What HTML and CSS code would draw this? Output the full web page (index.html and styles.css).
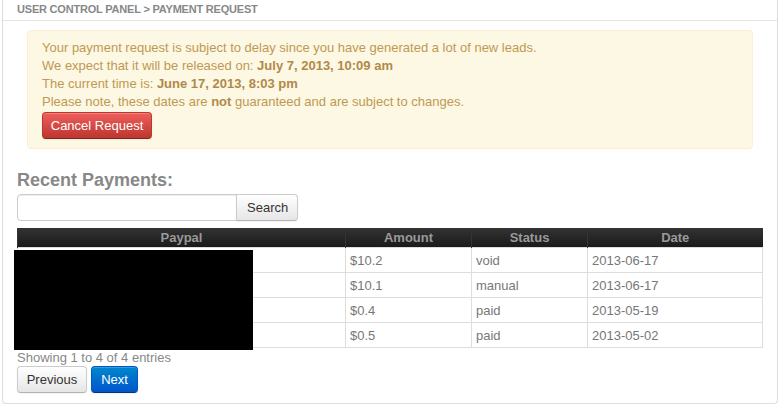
FILE: index.html
```html
<!DOCTYPE html>
<html lang="en">
<head>
    <meta charset="UTF-8">
    <title>Payment Request</title>
    <link rel="stylesheet" href="styles.css">
</head>
<body>
    <div class="panel">
        <div class="panel-head">User Control Panel &gt; Payment Request</div>
        <div class="panel-body">
            <div class="alert">
                Your payment request is subject to delay since you have generated a lot of new leads.<br>
                We expect that it will be released on: <b>July 7, 2013, 10:09 am</b><br>
                The current time is: <b>June 17, 2013, 8:03 pm</b><br>
                Please note, these dates are <b>not</b> guaranteed and are subject to changes.<br>
                <button class="btn btn-danger">Cancel Request</button>
            </div>

            <h3>Recent Payments:</h3>
            <div class="search">
                <input type="text" class="search-input">
                <button class="btn search-btn">Search</button>
            </div>

            <div class="table-wrap">
                <table class="payments">
                    <thead>
                        <tr>
                            <th class="col-paypal">Paypal</th>
                            <th class="col-amount">Amount</th>
                            <th class="col-status">Status</th>
                            <th>Date</th>
                        </tr>
                    </thead>
                    <tbody>
                        <tr><td></td><td>$10.2</td><td>void</td><td>2013-06-17</td></tr>
                        <tr><td></td><td>$10.1</td><td>manual</td><td>2013-06-17</td></tr>
                        <tr><td></td><td>$0.4</td><td>paid</td><td>2013-05-19</td></tr>
                        <tr><td></td><td>$0.5</td><td>paid</td><td>2013-05-02</td></tr>
                    </tbody>
                </table>
                <div class="redact"></div>
            </div>

            <div class="info">Showing 1 to 4 of 4 entries</div>
            <div class="pager">
                <button class="btn btn-prev">Previous</button>
                <button class="btn btn-primary">Next</button>
            </div>
        </div>
    </div>
</body>
</html>
```

FILE: styles.css
```css
body {
    margin: 0;
    font-family: "Liberation Sans", Arial, sans-serif;
    font-size: 13px;
    color: #777;
    background-color: #fff;
}
.panel {
    margin: 0 2px 0 2px;
    border: 1px solid #ddd;
    border-top: none;
    border-radius: 0 0 4px 4px;
    height: 404px;
    box-sizing: border-box;
}
.panel-head {
    height: 21px;
    line-height: 19px;
    padding-left: 14px;
    border-bottom: 1px solid #e5e5e5;
    box-sizing: border-box;
    font-size: 11px;
    font-weight: bold;
    letter-spacing: -0.2px;
    text-transform: uppercase;
    color: #888;
}
.panel-body {
    padding: 9px 14px 0 14px;
}
.alert {
    margin: 0 10px;
    padding: 8px 14px 9px 14px;
    background-color: #fcf8e3;
    border: 1px solid #fbeed5;
    border-radius: 4px;
    color: #c09853;
    line-height: 18px;
}
.alert b {
    color: #b0894a;
}
.btn {
    display: inline-block;
    font-family: "Liberation Sans", Arial, sans-serif;
    font-size: 13px;
    height: 27px;
    padding: 0 10px;
    border: 1px solid #ccc;
    border-bottom-color: #b3b3b3;
    border-radius: 4px;
    background-image: linear-gradient(#ffffff, #e6e6e6);
    color: #333;
    cursor: pointer;
    box-shadow: inset 0 1px 0 rgba(255, 255, 255, 0.2), 0 1px 2px rgba(0, 0, 0, 0.05);
}
.btn-danger {
    margin-top: 1px;
    width: 110px;
    padding: 0;
    color: #fff;
    background-image: linear-gradient(#ee5f5b, #bd362f);
    border-color: #bd362f #bd362f #802420;
}
.btn-prev {
    width: 70px;
    padding: 0;
}
.btn-primary {
    width: 47px;
    padding: 0;
    color: #fff;
    background-image: linear-gradient(#0088cc, #0055cc);
    border-color: #0055cc #0055cc #003580;
}
h3 {
    margin: 21px 0 4px 0;
    font-size: 18px;
    line-height: 20px;
    color: #888;
}
.search {
    display: flex;
}
.search-input {
    width: 220px;
    height: 27px;
    box-sizing: border-box;
    border: 1px solid #ccc;
    border-radius: 4px 0 0 4px;
    box-shadow: inset 0 1px 1px rgba(0, 0, 0, 0.075);
}
.search-btn {
    width: 62px;
    margin-left: -1px;
    border-radius: 0 4px 4px 0;
}
.table-wrap {
    position: relative;
    margin-top: 7px;
}
.payments {
    width: 746px;
    border-collapse: collapse;
}
.payments th {
    height: 19px;
    padding: 0;
    background-image: linear-gradient(#333, #1a1a1a);
    color: #999;
    font-weight: bold;
    border-left: 1px solid #333;
}
.payments td {
    height: 24px;
    padding: 0 4px;
    border: 1px solid #ddd;
    color: #777;
}
.col-paypal { width: 327px; }
.col-amount { width: 125px; }
.col-status { width: 115px; }
/* blacked-out email column, as in the screenshot */
.redact {
    position: absolute;
    left: -3px;
    top: 22px;
    width: 239px;
    height: 100px;
    background-color: #000;
}
.info {
    margin-top: 2px;
    line-height: 16px;
    color: #888;
}
.pager {
    margin-top: 0;
    display: flex;
    gap: 4px;
}
```
